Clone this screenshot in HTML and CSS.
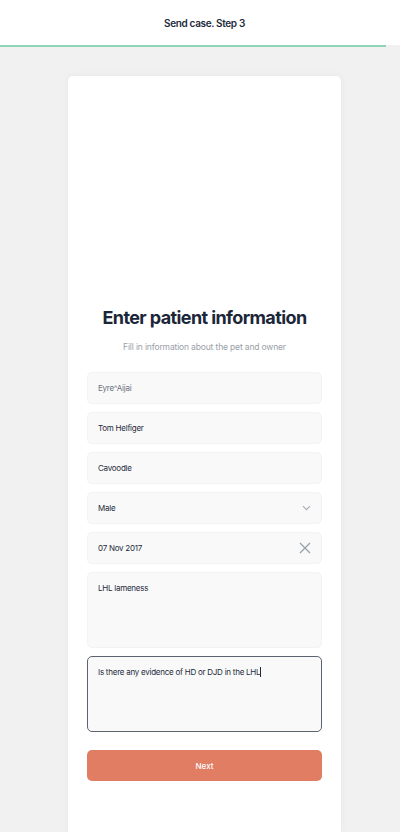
FILE: index.html
```html
<!DOCTYPE html>
<html>
<head>
<meta charset="utf-8">
<link rel="stylesheet" href="styles.css">
</head>
<body>
<header class="topbar">
  <div class="topbar-title">Send case. Step 3</div>
  <div class="progress"><div class="progress-fill" style="width:96.5%"></div></div>
</header>
<main class="page">
  <section class="card">
    <div class="hero"></div>
    <h1 class="title">Enter patient information</h1>
    <p class="subtitle">Fill in information about the pet and owner</p>
    <form class="form">
      <div class="field"><span class="muted">Eyre^Aijai</span></div>
      <div class="field"><span>Tom Helfiger</span></div>
      <div class="field"><span>Cavoodle</span></div>
      <div class="field field-select"><span>Male</span>
        <svg class="chev" width="9" height="6" viewBox="0 0 9 6"><path d="M1 1.2l3.5 3.5L8 1.2" fill="none" stroke="#a8adb5" stroke-width="1.1"/></svg>
      </div>
      <div class="field field-select"><span>07 Nov 2017</span>
        <svg class="clear" width="12" height="12" viewBox="0 0 12 12"><path d="M1 1l10 10M11 1L1 11" fill="none" stroke="#9aa0a8" stroke-width="1.3"/></svg>
      </div>
      <div class="area"><span>LHL lameness</span></div>
      <div class="area area-active"><span>Is there any evidence of HD or DJD in the LHL</span><span class="caret"></span></div>
      <button type="button" class="btn">Next</button>
    </form>
  </section>
</main>
</body>
</html>
```
FILE: styles.css
```css
* { box-sizing: border-box; }
html, body { margin: 0; padding: 0; }
body {
  background: #f1f1f1;
  font-family: Inter, "Noto Sans", sans-serif;
  color: #1e293b;
  width: 400px;
  height: 832px;
  overflow: hidden;
}
.topbar {
  background: #fff;
  height: 47px;
  display: flex;
  flex-direction: column;
}
.topbar-title {
  flex: 1;
  display: flex;
  align-items: center;
  justify-content: center;
  font-size: 10px;
  font-weight: 600;
  letter-spacing: -0.35px;
  color: #1e2a3b;
  padding-left: 9px;
}
.progress {
  height: 2px;
  background: #f1f1f1;
}
.progress-fill {
  height: 100%;
  background: #8fd4b6;
}
.page {
  display: flex;
  justify-content: center;
  padding-top: 29px;
  padding-left: 9px;
}
.card {
  width: 273px;
  height: 756px;
  background: #fff;
  border-radius: 5px 5px 0 0;
  box-shadow: 0 0 8px rgba(0,0,0,0.05);
  padding: 0 19px;
}
.hero {
  height: 229px;
}
.title {
  margin: 0;
  text-align: center;
  font-size: 18px;
  font-weight: 700;
  letter-spacing: -0.6px;
  color: #1b2638;
  line-height: 26px;
}
.subtitle {
  margin: 9px 0 18px;
  text-align: center;
  font-size: 8.5px;
  color: #9aa0a8;
  line-height: 14px;
  letter-spacing: -0.15px;
}
.form {
  display: flex;
  flex-direction: column;
  gap: 8px;
}
.field {
  height: 32px;
  background: #f9f9f9;
  border: 1px solid #f3f3f3;
  border-radius: 5px;
  display: flex;
  align-items: center;
  padding: 0 10px;
  font-size: 8px;
  color: #1e2a3b;
  letter-spacing: -0.25px;
}
.muted { color: #6b7280; }
.field-select { justify-content: space-between; }
.area {
  height: 76px;
  background: #f9f9f9;
  border: 1px solid #f3f3f3;
  border-radius: 5px;
  padding: 9px 10px;
  font-size: 8px;
  line-height: 12px;
  color: #1e2a3b;
  letter-spacing: -0.25px;
}
.area-active {
  border: 1px solid #5b6370;
}
.caret {
  display: inline-block;
  width: 1px;
  height: 10px;
  background: #1e2a3b;
  vertical-align: -2px;
}
.btn {
  margin-top: 10px;
  height: 31px;
  border: none;
  border-radius: 5px;
  background: #e07d63;
  color: #fff;
  font-family: Inter, "Noto Sans", sans-serif;
  font-size: 8px;
  font-weight: 500;
}
```
